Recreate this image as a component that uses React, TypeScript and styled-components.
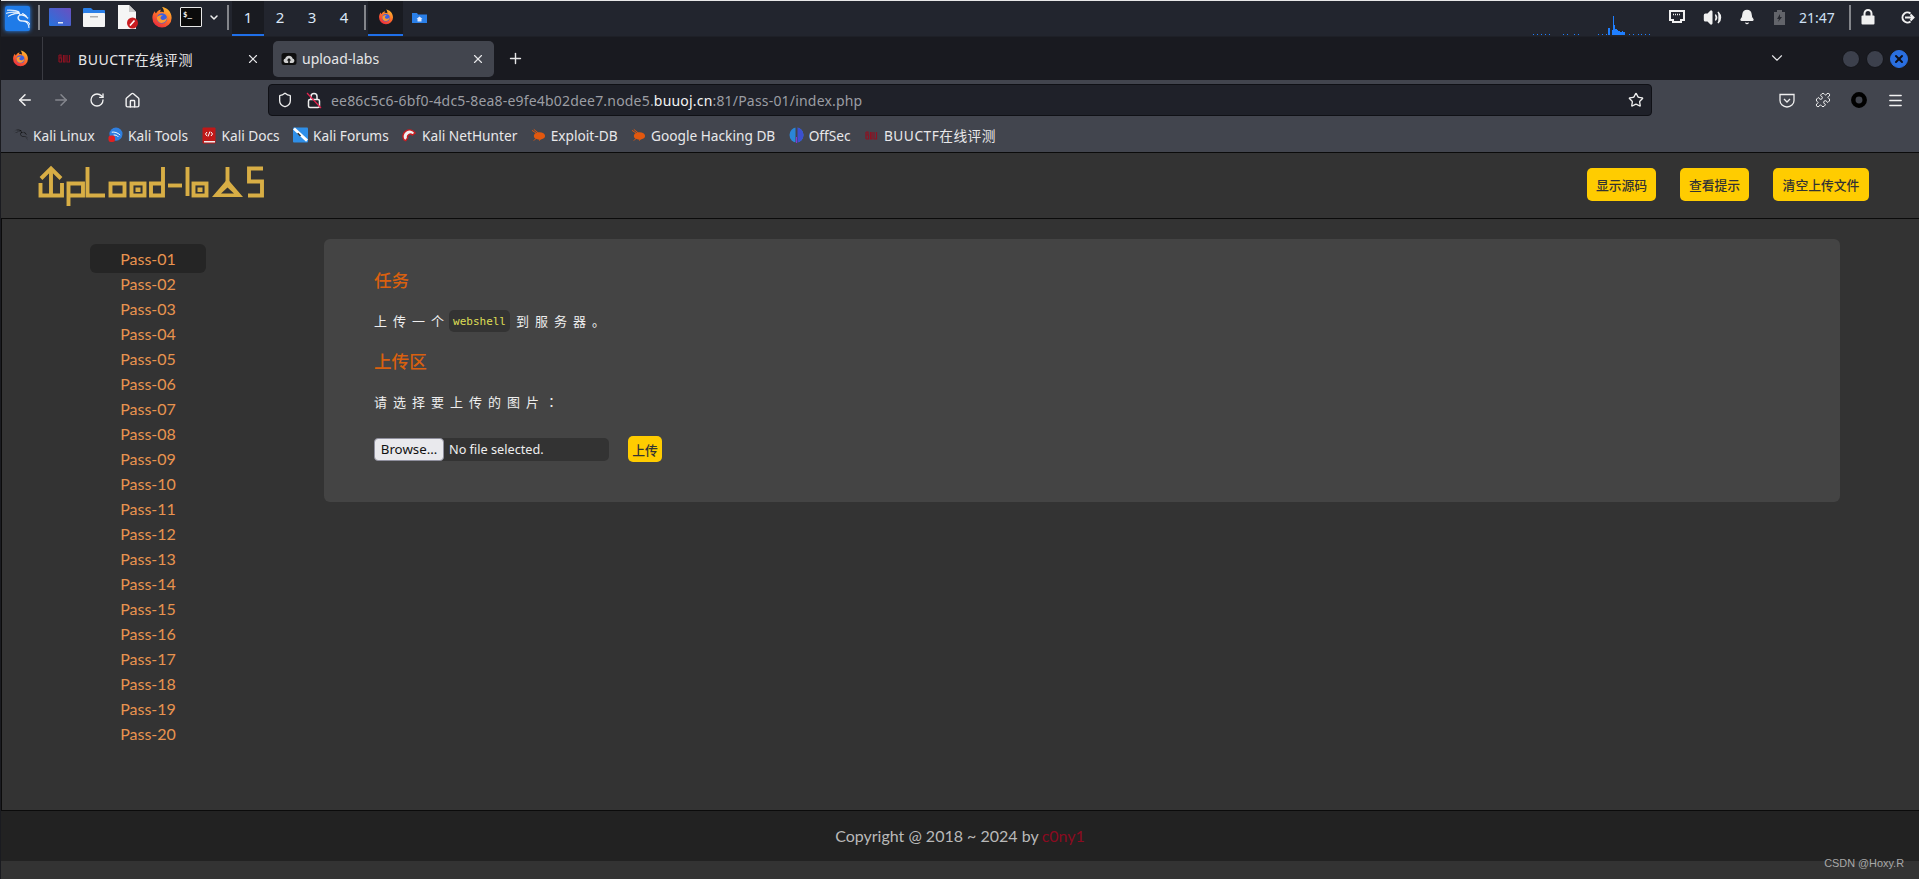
import React from "react";
import styled, { createGlobalStyle } from "styled-components";
import { ArrowLeft, ArrowRight, RotateCw, Home, Shield, Star, Puzzle, Menu, X, Plus, ChevronDown, Volume2, Bell } from "lucide-react";
import { SiKalilinux } from "react-icons/si";

const UI = `"Noto Sans", "Noto Sans CJK SC", sans-serif`;
const WEB = `Lato, "Noto Sans CJK SC", sans-serif`;

const Global = createGlobalStyle`
  html, body { margin: 0; padding: 0; background: #333; overflow: hidden; }
  * { box-sizing: border-box; }
`;

const Root = styled.div`
  width: 1919px; height: 879px; display: flex; flex-direction: column;
  position: relative; background: #333; border-left: 1px solid #1a1b20; overflow: hidden;
  font-family: ${UI};
`;

/* desktop panel */
const Panel = styled.div`
  height: 37px; flex: none; display: flex; align-items: stretch;
  background: #22252e; border-top: 1px solid #e8e8e8; border-bottom: 1px solid #1e2027;
`;
const Slot = styled.div<{ $ml?: number; $w: number }>`
  width: ${p => p.$w}px; margin-left: ${p => p.$ml ?? 0}px; flex: none;
  display: flex; align-items: center; justify-content: center; padding-bottom: 3px;
`;
const KaliTile = styled.div`
  width: 25px; height: 25px; margin-top: 3px; display: flex; align-items: center; justify-content: center;
  background: #1f7be8; border-radius: 2px; box-shadow: 0 0 4px #2b8cff; color: #fff;
`;
const PanelSep = styled.div<{ $ml: number }>`
  width: 2px; height: 25px; align-self: center; margin-top: -2px; margin-left: ${p => p.$ml}px;
  background: #83858a; flex: none;
`;
const Workspace = styled.div<{ $on?: boolean; $ml?: number }>`
  width: 32px; margin-left: ${p => p.$ml ?? 0}px; flex: none; display: flex; align-items: center; justify-content: center;
  padding-bottom: 3px; font-size: 15px; color: #dbe7f7;
  ${p => p.$on ? `background: #191b21; box-shadow: inset 0 -2px 0 #1f6fe8;` : ``}
`;
const TaskButton = styled.div<{ $on?: boolean; $ml?: number; $w: number }>`
  width: ${p => p.$w}px; margin-left: ${p => p.$ml ?? 0}px; flex: none; display: flex;
  align-items: center; justify-content: center; padding-bottom: 3px;
  ${p => p.$on ? `background: #191b21; box-shadow: inset 0 -2px 0 #1f6fe8;` : ``}
`;
const Tray = styled.div`
  margin-left: auto; display: flex; align-items: stretch; color: #f0f0f0;
`;
const GraphSlot = styled.div`
  margin-right: 9px; display: flex;
`;
const Clock = styled.div`
  width: 36px; margin-left: 10px; display: flex; align-items: center; padding-bottom: 3px;
  font-size: 14px; color: #cfe0f5; white-space: nowrap;
`;

/* tabs */
const TabBar = styled.div`
  height: 43px; flex: none; display: flex; align-items: center; background: #191a20; color: #e6e6e8;
`;
const FoxSlot = styled.div`
  width: 42px; height: 100%; flex: none; display: flex; align-items: center; justify-content: center;
  padding-right: 3px; border-right: 1px solid #3a3b42;
`;
const Tab = styled.div<{ $on?: boolean; $w: number; $ml?: number; $pl?: number; $pr?: number }>`
  width: ${p => p.$w}px; height: 36px; margin-left: ${p => p.$ml ?? 0}px; flex: none; display: flex; align-items: center;
  padding: 0 ${p => p.$pr ?? 9}px 0 ${p => p.$pl ?? 8}px; border-radius: 5px; font-size: 14px; gap: 5px; white-space: nowrap;
  background: ${p => p.$on ? "#42454e" : "transparent"};
`;
const TabTitle = styled.span<{ $ml?: number; $ls?: number }>`
  flex: 1; margin-left: ${p => p.$ml ?? 0}px; letter-spacing: ${p => p.$ls ?? 0}px;
`;
const TabEnd = styled.div`
  margin-left: auto; display: flex; align-items: center; height: 100%;
`;
const ChevronSlot = styled.div`
  margin-right: 56px; display: flex; margin-top: -2px;
`;
const WinBtn = styled.div<{ $close?: boolean }>`
  width: 18px; height: 18px; border-radius: 50%; margin-right: 6px; display: flex; align-items: center; justify-content: center;
  background: ${p => p.$close ? "#2a6fe0" : "#3c404c"};
  border: 1px solid ${p => p.$close ? "#2a6fe0" : "#14151a"};
  color: #0d0f18;
`;

/* nav toolbar */
const Chrome = styled.div`
  height: 72px; flex: none; background: #42454e; color: #f2f2f2;
  display: flex; flex-direction: column; padding-top: 4px;
`;
const NavRow = styled.div`
  height: 32px; flex: none; display: flex; align-items: center;
`;
const NavBtn = styled.div<{ $w: number; $dim?: boolean }>`
  width: ${p => p.$w}px; flex: none; display: flex; justify-content: center; color: ${p => p.$dim ? "#85878e" : "#f2f2f2"};
`;
const UrlBar = styled.div`
  width: 1384px; height: 32px; margin-left: 1px; flex: none; display: flex; align-items: center;
  background: #1f2129; border: 1px solid #101116; border-radius: 4px; padding-left: 8px; color: #eee;
`;
const UrlLock = styled.div`
  margin-left: 12px; width: 18px; display: flex; justify-content: center; flex: none;
`;
const UrlText = styled.div`
  margin-left: 8px; font-size: 14px; color: #9b9da3; white-space: nowrap; letter-spacing: 0.19px;
  & > b { font-weight: 400; color: #f4f4f4; }
`;
const UrlStar = styled.div`
  margin-left: auto; margin-right: 7px; display: flex;
`;
const NavRight = styled.div`
  margin-left: 127px; display: flex; width: 125px; justify-content: space-between; align-items: center;
`;
const BookRow = styled.div`
  height: 35px; padding: 3px 0 0 12px; display: flex; align-items: center; gap: 13.4px; flex: none;
`;
const Bookmark = styled.div<{ $ls?: number }>`
  display: flex; align-items: center; gap: 5px; font-size: 13.7px; color: #e8e8ea; white-space: nowrap;
  letter-spacing: ${p => p.$ls ?? 0}px;
`;
const BookIcon = styled.span`
  width: 15px; height: 18px; flex: none; display: flex; align-items: center; justify-content: center;
`;

/* page */
const Header = styled.header`
  height: 67px; flex: none; display: flex; align-items: flex-start; background: #333;
  border-top: 1px solid #0b0b0b; border-bottom: 1px solid #0b0b0b;
`;
const LogoWrap = styled.div`
  margin: 7px 0 0 29px; flex: none; display: flex;
`;
const HeadActions = styled.div`
  margin: 15px 50px 0 auto; display: flex; gap: 24px;
`;
const YellowButton = styled.button<{ $w: number; $h: number }>`
  width: ${p => p.$w}px; height: ${p => p.$h}px; padding: 0; border: 0; border-radius: 5px; background: #fc0;
  color: #333; font-family: ${WEB}; font-size: 12.8px; font-weight: 500; cursor: pointer;
`;
const Main = styled.main`
  height: 591px; flex: none; display: flex; align-items: flex-start; border-left: 1px solid #0b0b0b;
`;
const Side = styled.nav`
  width: 116px; margin: 25px 0 0 88px; flex: none; display: flex; flex-direction: column;
`;
const PassItem = styled.div<{ $on?: boolean }>`
  height: 29px; margin-bottom: -4px; display: flex; align-items: center; justify-content: center;
  font-family: ${WEB}; font-size: 16px; color: #e9934f; border-radius: 6px;
  background: ${p => p.$on ? "#252525" : "transparent"};
`;
const Card = styled.section`
  width: 1516px; height: 263px; margin: 20px 0 0 118px; flex: none; padding: 29px 0 0 50px;
  background: #444; border-radius: 6px; display: flex; flex-direction: column;
`;
const Heading = styled.h3<{ $mt?: number }>`
  margin: ${p => p.$mt ?? 0}px 0 0; height: 26px; line-height: 26px; font-size: 17.6px; font-weight: 500; color: #d9600f;
  font-family: ${WEB};
`;
const Para = styled.div`
  margin-top: 16px; height: 22px; padding-bottom: 2px; display: flex; align-items: center; font-family: ${WEB};
  font-size: 13px; letter-spacing: 6px; color: #eee; white-space: pre;
`;
const Code = styled.code`
  height: 22px; margin: 2px 6px 0 -1px; padding: 0 4px; display: inline-flex; align-items: center;
  background: #333; border-radius: 5px; color: #dede55; letter-spacing: 0;
  font-family: "DejaVu Sans Mono", monospace; font-size: 11px;
`;
const Colon = styled.span`
  font-family: "Noto Sans CJK TC", sans-serif;
`;
const UploadRow = styled.div`
  margin: 23px 0 0 0; display: flex; align-items: center; gap: 19px;
`;
const FileBox = styled.div`
  width: 235px; height: 23px; display: flex; align-items: center; background: #333; border-radius: 5px;
  color: #eee; font-family: ${UI}; font-size: 12.7px;
`;
const Browse = styled.div`
  width: 70px; height: 23px; flex: none; display: flex; align-items: center; justify-content: center; margin-right: 5px;
  background: #e9e9ed; color: #111; border: 1px solid #8f8f9d; border-radius: 4px; font-size: 13.3px;
`;
const Footer = styled.footer`
  height: 51px; flex: none; display: flex; align-items: center; justify-content: center; background: #222;
  border-top: 1px solid #0b0b0b; font-family: ${WEB}; font-size: 16px; color: #b9b9b9; padding-bottom: 2px;
`;
const Author = styled.span`
  color: #8b0a20; margin-left: 3px;
`;
const Mark = styled.div`
  position: absolute; right: 15px; bottom: 10px; font-family: "Liberation Sans", sans-serif; font-size: 10.9px; color: #a8a8a8;
`;

const Fox = ({ s = 20 }: { s?: number }) => (
  <svg width={s} height={s} viewBox="0 0 24 24">
    <defs><linearGradient id="fx" x1="0.8" y1="0" x2="0.2" y2="1"><stop offset="0" stopColor="#ffc02e" /><stop offset="0.5" stopColor="#ff6a2a" /><stop offset="1" stopColor="#e8263f" /></linearGradient></defs>
    <path d="M12 23a10.5 10.5 0 0 1-10.5-10.5c0-3 1-5.4 2.6-7.3.2 1 .6 1.9 1.3 2.4C6.7 5 9 3.400 11 3.500c-1 1-1.200 2 -.7 2.500 1.800-.4 3 -.2 3.700.6.200-2.400-.4-4.500-2-6 4.500.5 10.500 4.500 10.500 12A10.500 10.500 0 0 1 12 23z" fill="url(#fx)" />
    <circle cx="12" cy="13" r="5.600" fill="#3c5fe0" />
    <path d="M6.500 11.500c1.500-2 5-2.500 6.500-1.500-2 .3-3 1.500-2.500 3 .5 1.300 2.300 2 4 1.500 1.500-.5 2.500-1.600 2.800-3 .4 3.800-2.500 6.700-6 6.500-2.800-.2-5.300-3-4.800-6.500z" fill="#ff9a2e" />
  </svg>
);
const Cloud = () => (
  <svg width="16" height="16" viewBox="0 0 16 16">
    <rect x="0.500" y="2" width="15" height="12" rx="2.500" fill="#0e0e0e" />
    <path d="M4.500 12a2.300 2.300 0 0 1-.2-4.500 3.800 3.800 0 0 1 7.300 0 2.300 2.300 0 0 1 0 4.500z" fill="#cfcfcf" />
    <path d="M8 7l2.300 2.500H8.800V12H7.200V9.500H5.700z" fill="#111" />
  </svg>
);
const Buu = () => (
  <svg width="13" height="11" viewBox="0 0 13 11">
    <path d="M1 2v7M1 2h2v3H1m0 0h2.500v4H1M5.500 2v7h1.500V2M9 2v7h2.500V2" stroke="#8c1222" strokeWidth="1.200" fill="none" />
  </svg>
);

const G = "#d8ae45";
const Logo = () => (
  <svg width="240" height="50" viewBox="30 160 240 50" fill="none" stroke={G} strokeWidth="3.900" role="img" aria-label="Upload-labs">
    <path d="M41 178.500L51 168.500L61 178.500" />
    <path d="M51 168V195M40.500 183V195.500H62V183" />
    <path d="M68.500 206V183.500H83V195.500H68.500" />
    <path d="M87.500 167V195.500H105" />
    <rect x="110.500" y="183.500" width="14" height="12" />
    <rect x="131.500" y="183.500" width="13" height="12" />
    <rect x="135.500" y="187.500" width="5" height="4.500" fill={G} stroke="none" />
    <path d="M163 167V195.500H151V183.500H163" />
    <path d="M168 185.500H182" />
    <path d="M187.500 167V196" />
    <rect x="193.500" y="183.500" width="13" height="12" />
    <rect x="197.500" y="187.500" width="5" height="4.500" fill={G} stroke="none" />
    <path d="M227.500 167V183" />
    <path fillRule="evenodd" stroke="none" fill={G} d="M227.500 179L243 197H212zM227.500 187.500L221 193.500H234z" />
    <path d="M263 168.500H249V181.500H262V195.500H248" />
  </svg>
);

const DesktopIcon = () => (
  <svg width="22" height="18" viewBox="0 0 22 18">
    <defs><linearGradient id="dk" x1="0" y1="1" x2="1" y2="0"><stop offset="0" stopColor="#2673dd" /><stop offset="1" stopColor="#6a4fc0" /></linearGradient></defs>
    <rect width="22" height="18" rx="1" fill="url(#dk)" />
    <rect x="9" y="14" width="5" height="1.500" fill="#dfe6f5" />
  </svg>
);
const FolderIcon = () => (
  <svg width="22" height="20" viewBox="0 0 22 20">
    <path d="M0 2a1 1 0 0 1 1-1h7l2 2h11a1 1 0 0 1 1 1v4H0z" fill="#2a7fe8" />
    <rect y="6" width="22" height="14" rx="1" fill="#f4f4f4" />
    <rect x="7" y="9" width="8" height="1.500" fill="#aeaeae" />
  </svg>
);
const DocIcon = () => (
  <svg width="22" height="24" viewBox="0 0 22 24">
    <path d="M1 0h11l7 7v17H1z" fill="#f5f5f5" />
    <path d="M12 0l7 7h-7z" fill="#c9c9c9" />
    <circle cx="15.500" cy="18" r="5.500" fill="#c81c20" />
    <path d="M13 20.500l4.500-5" stroke="#fff" strokeWidth="1.600" />
  </svg>
);
const SmallFolder = () => (
  <svg width="15" height="11" viewBox="0 0 15 11">
    <path d="M0 1h5l1 1.500h9V11H0z" fill="#2a7fe8" />
    <path d="M7.500 4.500l3 2.500H9.500v2.500h-4V7H4.500z" fill="#dfeaff" />
  </svg>
);
const Term = styled.div`
  width: 22px; height: 20px; background: #0b0b0b; border: 1px solid #e8e8e8; border-radius: 1px;
  font-family: "DejaVu Sans Mono", monospace; font-size: 7.5px; line-height: 1; color: #eee; padding: 3px 0 0 2px; font-weight: 700;
`;
const NetGraph = () => {
  const dots = [32, 36, 40, 44, 48, 62, 66, 73, 77, 97, 101, 105, 128, 132, 137, 140, 144, 148, 157];
  const bars: [number, number][] = [[107, 7], [108, 7], [111, 5], [112, 19], [113, 10], [114, 6], [115, 6], [116, 5], [117, 4], [118, 4], [119, 3], [120, 3], [121, 4], [122, 3], [123, 3]];
  return (
    <svg width="126" height="35" viewBox="0 0 126 35" fill="#1f7fff">
      {dots.map((x, i) => <rect key={i} x={x - 31} y={33} width="1" height="1" />)}
      {bars.map(([x, h]) => <rect key={x} x={x - 31} y={34 - h} width="1" height={h} />)}
    </svg>
  );
};
const BIcon = {
  tools: () => (<svg width="16" height="18" viewBox="0 0 16 18"><circle cx="8.500" cy="8" r="7" fill="#2f7fe0" /><path d="M4 6c3-.5 6 .5 9 3M6 9c2 0 4 .5 5 2" stroke="#fff" fill="none" /><rect x="0.500" y="9.500" width="7" height="7" rx="2.500" fill="#e02020" /></svg>),
  docs: () => (<svg width="14" height="17" viewBox="0 0 14 17"><rect x="0.500" y="0.500" width="13" height="16" rx="1" fill="#c01818" /><rect x="2" y="14" width="11" height="1.500" fill="#eee" /><path d="M5 5L3.500 7 5 9M9 5l1.500 2L9 9M8 4.500L6 9.500" stroke="#fff" fill="none" /></svg>),
  forums: () => (<svg width="16" height="16" viewBox="0 0 16 16"><rect width="16" height="16" rx="1" fill="#2f8fe8" /><path d="M1 1l14 13" stroke="#fff" strokeWidth="3" /><path d="M5 6l3 3" stroke="#222" strokeWidth="1.500" /></svg>),
  net: () => (<svg width="16" height="16" viewBox="0 0 16 16"><path d="M2 13a6.500 6.500 0 0 1 12-7l-3 2a3 3 0 0 0-5 3l-2 3z" fill="#f0f0f0" stroke="#c81c20" strokeWidth="1.500" /></svg>),
  bug: () => (<svg width="16" height="14" viewBox="0 0 16 14"><ellipse cx="9" cy="8" rx="6" ry="4" fill="#e2580f" /><path d="M1 2l6 4M3 1l5 4M3 13l3-3M9 13l1-2" stroke="#e2580f" /></svg>),
  off: () => (<svg width="15" height="16" viewBox="0 0 15 16"><ellipse cx="7.500" cy="8" rx="7" ry="7.500" fill="#2a86d8" /><path d="M7.500 0.500a7 7.500 0 0 1 7 7.500 7 7.500 0 0 1-7 7.500z" fill="#3c4fd0" /><rect x="6.500" y="0" width="2" height="16" fill="#42454e" /><rect x="7" y="10" width="1" height="6" fill="#8a35d0" /></svg>),
};

const books: [string, React.ReactNode, number][] = [
  ["Kali Linux", <SiKalilinux size={18} color="#0a0a0a" />, 0],
  ["Kali Tools", <BIcon.tools />, 0],
  ["Kali Docs", <BIcon.docs />, 0],
  ["Kali Forums", <BIcon.forums />, 0],
  ["Kali NetHunter", <BIcon.net />, 0],
  ["Exploit-DB", <BIcon.bug />, 0],
  ["Google Hacking DB", <BIcon.bug />, 0],
  ["OffSec", <BIcon.off />, 0],
  ["BUUCTF在线评测", <Buu />, 0.5],
];
const passes = Array.from({ length: 20 }, (_, i) => `Pass-${String(i + 1).padStart(2, "0")}`);

export default function App() {
  return (
    <Root>
      <Global />
      <Panel>
        <Slot $w={33}><KaliTile><SiKalilinux size={24} stroke="#fff" strokeWidth={0.6} /></KaliTile></Slot>
        <PanelSep $ml={4} />
        <Slot $ml={9} $w={22}><DesktopIcon /></Slot>
        <Slot $ml={12} $w={22}><FolderIcon /></Slot>
        <Slot $ml={12} $w={22}><DocIcon /></Slot>
        <Slot $ml={12} $w={22}><Fox s={23} /></Slot>
        <Slot $ml={7} $w={22}><Term>$_</Term></Slot>
        <Slot $ml={6} $w={12}><ChevronDown size={13} color="#eee" strokeWidth={3} /></Slot>
        <PanelSep $ml={7} />
        <Workspace $on $ml={3}>1</Workspace>
        <Workspace>2</Workspace>
        <Workspace>3</Workspace>
        <Workspace>4</Workspace>
        <PanelSep $ml={4} />
        <TaskButton $on $ml={2} $w={35}><Fox s={16} /></TaskButton>
        <TaskButton $ml={9} $w={15}><SmallFolder /></TaskButton>
        <Tray>
          <GraphSlot><NetGraph /></GraphSlot>
          <Slot $w={20}>
            <svg width="16" height="14" viewBox="0 0 16 14" fill="none" stroke="#f0f0f0" strokeWidth="2"><path d="M1 1h14v9h-3v2H4v-2H1z" /><path d="M4 4.500h8" strokeWidth="1.500" strokeDasharray="1 1" /></svg>
          </Slot>
          <Slot $ml={15} $w={20}><Volume2 size={19} fill="#f0f0f0" /></Slot>
          <Slot $ml={15} $w={20}><Bell size={16} fill="#f0f0f0" /></Slot>
          <Slot $ml={12} $w={20}>
            <svg width="11" height="15" viewBox="0 0 11 15"><path d="M3 0h5v2h3v13H0V2h3z" fill="#62646a" /><path d="M6 4L3 9h2l-1 3 4-5H6z" fill="#26282f" /></svg>
          </Slot>
          <Clock>21:47</Clock>
          <PanelSep $ml={14} />
          <Slot $ml={7} $w={20}>
            <svg width="14" height="16" viewBox="0 0 14 16" fill="none"><rect x="0.500" y="6.500" width="13" height="9" rx="1" fill="#f0f0f0" /><path d="M3.500 7V4.500a3.500 3.500 0 0 1 7 0V7" stroke="#f0f0f0" strokeWidth="2" /></svg>
          </Slot>
          <Slot $ml={19} $w={20}>
            <svg width="15" height="13" viewBox="0 0 15 13" fill="none" stroke="#f0f0f0" strokeWidth="2"><path d="M10.500 2.500a5 5 0 1 0 0 8" /><path d="M5 6.500h8.500M10.500 3.500l3 3-3 3" /></svg>
          </Slot>
          <Slot $w={2} />
        </Tray>
      </Panel>
      <TabBar>
        <FoxSlot><Fox s={17} /></FoxSlot>
        <Tab $w={225} $ml={5} $pl={10} $pr={13}>
          <Buu />
          <TabTitle $ml={2} $ls={0.55}>BUUCTF在线评测</TabTitle>
          <X size={14} />
        </Tab>
        <Tab $on $w={221}>
          <Cloud />
          <TabTitle>upload-labs</TabTitle>
          <X size={14} />
        </Tab>
        <Tab $w={40} $ml={5}><Plus size={17} /></Tab>
        <TabEnd>
          <ChevronSlot><ChevronDown size={18} strokeWidth={1.500} /></ChevronSlot>
          <WinBtn />
          <WinBtn />
          <WinBtn $close><X size={12} strokeWidth={4} /></WinBtn>
          <Slot $w={5} />
        </TabEnd>
      </TabBar>
      <Chrome>
        <NavRow>
          <NavBtn $w={48}><ArrowLeft size={18} /></NavBtn>
          <NavBtn $w={24} $dim><ArrowRight size={18} /></NavBtn>
          <NavBtn $w={48}><RotateCw size={16} /></NavBtn>
          <NavBtn $w={22}><Home size={17} /></NavBtn>
          <Slot $w={124} />
          <UrlBar>
            <Shield size={16} />
            <UrlLock>
              <svg width="16" height="17" viewBox="0 0 16 17" fill="none"><rect x="2.500" y="7.500" width="11" height="8" rx="1.500" stroke="#eee" strokeWidth="1.500" /><path d="M5 7V4.500a3 3 0 0 1 6 0V7" stroke="#eee" strokeWidth="1.500" /><path d="M1 1l14 15" stroke="#e5234f" strokeWidth="1.200" /></svg>
            </UrlLock>
            <UrlText>ee86c5c6-6bf0-4dc5-8ea8-e9fe4b02dee7.node5.<b>buuoj.cn</b>:81/Pass-01/index.php</UrlText>
            <UrlStar><Star size={16} /></UrlStar>
          </UrlBar>
          <NavRight>
            <svg width="16" height="15" viewBox="0 0 16 15" fill="none" stroke="#eee" strokeWidth="1.300"><path d="M1 1.500h14v6a7 6.500 0 0 1-14 0z" /><path d="M5 6l3 3 3-3" /></svg>
            <Puzzle size={16} strokeWidth={1.500} />
            <svg width="16" height="16" viewBox="0 0 16 16"><circle cx="8" cy="8" r="5.700" fill="none" stroke="#000" strokeWidth="4.500" /></svg>
            <Menu size={17} />
          </NavRight>
        </NavRow>
        <BookRow>
          {books.map(([t, i, ls]) => <Bookmark key={t} $ls={ls}><BookIcon>{i}</BookIcon>{t}</Bookmark>)}
        </BookRow>
      </Chrome>
      <Header>
        <LogoWrap><Logo /></LogoWrap>
        <HeadActions>
          <YellowButton $w={69} $h={33}>显示源码</YellowButton>
          <YellowButton $w={69} $h={33}>查看提示</YellowButton>
          <YellowButton $w={96} $h={33}>清空上传文件</YellowButton>
        </HeadActions>
      </Header>
      <Main>
        <Side>
          {passes.map((p, i) => <PassItem key={p} $on={i === 0}>{p}</PassItem>)}
        </Side>
        <Card>
          <Heading>任务</Heading>
          <Para>上传一个<Code>webshell</Code>到服务器。</Para>
          <Heading $mt={17}>上传区</Heading>
          <Para>请选择要上传的图片<Colon>：</Colon></Para>
          <UploadRow>
            <FileBox><Browse>Browse…</Browse>No file selected.</FileBox>
            <YellowButton $w={34} $h={26}>上传</YellowButton>
          </UploadRow>
        </Card>
      </Main>
      <Footer>Copyright @ 2018 ~ 2024 by<Author>c0ny1</Author></Footer>
      <Mark>CSDN @Hoxy.R</Mark>
    </Root>
  );
}
